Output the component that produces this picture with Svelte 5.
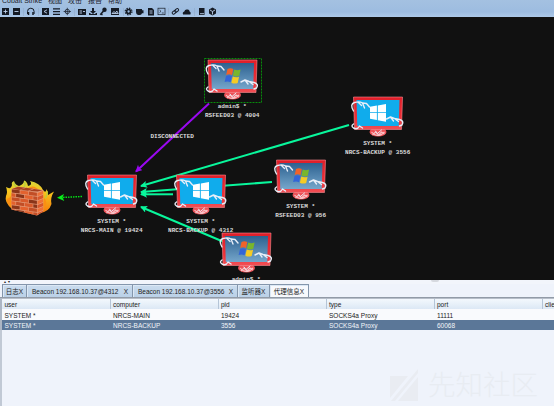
<script>
  const nodes = [
    { x: 208, y: 60, os: 'xp', user: 'admin$ *', host: 'RSFEED03 @ 4004', selected: true },
    { x: 353.5, y: 97, os: 'win8', user: 'SYSTEM *', host: 'NRCS-BACKUP @ 3556' },
    { x: 276.5, y: 160, os: 'xp', user: 'SYSTEM *', host: 'RSFEED03 @ 956' },
    { x: 87.5, y: 175, os: 'win8', user: 'SYSTEM *', host: 'NRCS-MAIN @ 19424' },
    { x: 176.5, y: 175, os: 'win8', user: 'SYSTEM *', host: 'NRCS-BACKUP @ 4312' },
    { x: 222, y: 233, os: 'xp', user: 'admin$ *', host: '' }
  ];
  const links = [
    [349, 125, 141, 186],
    [272, 182, 141, 192],
    [173, 194.3, 141, 194.3],
    [224, 242, 141, 207]
  ];
  const tabs = [
    { label: '日志', w: 25 },
    { label: 'Beacon 192.168.10.37@4312', w: 106, wide: true },
    { label: 'Beacon 192.168.10.37@3556', w: 105, wide: true },
    { label: '监听器', w: 32 },
    { label: '代理信息', w: 39, active: true }
  ];
  const columns = ['user', 'computer', 'pid', 'type', 'port', 'client'];
  const rows = [
    ['SYSTEM *', 'NRCS-MAIN', '19424', 'SOCKS4a Proxy', '11111', ''],
    ['SYSTEM *', 'NRCS-BACKUP', '3556', 'SOCKS4a Proxy', '60068', '']
  ];
  const courses = [0, 1, 2, 3, 4, 5];
  const clay = ['#8b3519', '#e4622e', '#c24e26', '#d95a2b'];
</script>

{#snippet flag(os)}
  {#if os === 'xp'}
    <g transform="translate(17 8)">
      <path d="M2.500 1Q5.500-.6 8.300 1L7 7.200Q4.500 5.600 1.200 7z" fill="#f0622a" />
      <path d="M9.200 1.500Q12.200 3 15.600 1.600L14.300 7.800Q11 9.200 7.900 7.600z" fill="#79b62c" />
      <path d="M1 8Q4 6.400 6.900 8L5.600 14.200Q2.600 12.800-.4 14z" fill="#3265d8" />
      <path d="M7.700 8.500Q11 10 14.100 8.700L12.700 15Q9.400 16.300 6.400 14.700z" fill="#f5cb24" />
    </g>
  {:else}
    <path d="M16.500 9.700L23.400 8.600V15.200H16.500zM24.300 8.400L32.500 7V15.200H24.300zM16.500 16.100H23.400V23L16.500 21.800zM24.300 16.100H32.500V24.700L24.300 23.200z" fill="#fff" />
  {/if}
{/snippet}

<div class="app">
  <header>
    <nav><span>Cobalt Strike</span><span>视图</span><span>攻击</span><span>报告</span><span>帮助</span></nav>
    <svg class="tools" width="225" height="14" viewBox="0 4 225 14">
      <g fill="#151b25">
        <path d="M2 8h7v7H2zM13 8h7v7h-7zM42 8h7v7h-7zM78 9h8v6h-8zM111 8h8v7h-8zM148 8h4l2 2v5.500h-6zM199 8h5.500v7H199zM92 8h2v3h2l-3 3-3-3h2zM89 13h1.500v1h5v-1H97v2h-8z" />
        <path d="M53 8.300h7v1.300h-7zM53 11h7v1.300h-7zM53 13.700h7V15h-7z" />
        <path d="M136 9h6v1.200h1.500v3H142q-.5 1.800-2 1.800h-2q-2-.5-2-3zM183 14.500q-.8-2.500 1.300-3 .7-2.600 3.100-2 2-.2 2.200 2 2 1 .8 3z" />
        <path d="M209 9.500l3.500-2 3.500 2v4l-3.500 2-3.500-2z" />
        <circle cx="104.500" cy="9.800" r="2.200" />
      </g>
      <g fill="none" stroke="#151b25">
        <path d="M27.500 14v-2.500a3.300 3.300 0 0 1 6.600 0V14" />
        <path d="M103.500 11l-3.200 3.800" stroke-width="1.600" />
        <path d="M28.500 12v3M33 12v3M101 14l1.500 1" stroke-width="1.500" />
        <circle cx="67.300" cy="11.500" r="2.200" stroke-width=".8" />
        <path d="M67.300 7.800v7.400M63.600 11.500H71" stroke-width=".7" />
        <circle cx="128.600" cy="11.500" r="2" stroke-width="1.700" />
        <circle cx="128.600" cy="11.500" r="3.400" stroke-width="1.100" stroke-dasharray="1.500 1.170" />
        <rect x="158" y="8.200" width="7" height="6.500" stroke-width=".7" />
        <path d="M159.500 10l1.500 1.300-1.500 1.300M161.800 13h2" stroke-width=".7" />
        <rect x="172" y="11.200" width="4.300" height="2.600" rx="1.300" transform="rotate(-40 174 12.500)" />
        <rect x="174.500" y="9" width="4.300" height="2.600" rx="1.300" transform="rotate(-40 176.700 10.300)" />
      </g>
      <g fill="none" stroke="#bed3ed" stroke-width=".9">
        <path d="M3.500 11.500h4M5.500 9.500v4M14.500 11.500h4M44 11.500l3-1.700M44 11.500l3 1.700M79.500 11h2.500M79.500 13h2.500M83 11.500h2M112 13.500l2-2 1.500 1.500 1.300-2 1.500 2.500zM149.500 11h3M149.500 13h3M200 13.700h4M210 10l2.500 1.500L215 10M212.500 11.500v3" />
      </g>
      <path d="M23.500 8v8M38.500 8v8M74.500 8v8M123.500 8v8M168.500 8v8M194.500 8v8" stroke="#8fa6c3" stroke-width=".5" />
    </svg>
  </header>

  <svg class="graph" width="554" height="263" viewBox="0 17 554 263">
    <defs>
      <linearGradient id="steel" x2="0" y2="1"><stop stop-color="#2d6190" /><stop offset="1" stop-color="#75a6cb" /></linearGradient>
      <linearGradient id="frame" x2="0" y2="1"><stop stop-color="#df1e29" /><stop offset=".7" stop-color="#ee3239" /><stop offset="1" stop-color="#f25056" /></linearGradient>
      <linearGradient id="fire" x2="0" y2="1"><stop stop-color="#d4d53b" /><stop offset=".35" stop-color="#f8c51d" /><stop offset="1" stop-color="#f47b0b" /></linearGradient>
      <clipPath id="wall"><path d="M11.500 189L37 191.500V215.500L11.500 209.500z" /></clipPath>
      <clipPath id="side"><path d="M37 191.500L43.300 190V211.500L37 215.500z" /></clipPath>
      <marker id="tip" markerUnits="userSpaceOnUse" markerWidth="8" markerHeight="8" refX="6" refY="3.500" orient="auto"><path d="M0 0L7 3.500L0 7L1.500 3.500z" fill="#09f79c" /></marker>
      <marker id="tip-off" markerUnits="userSpaceOnUse" markerWidth="8" markerHeight="8" refX="6" refY="3.500" orient="auto"><path d="M0 0L7 3.500L0 7L1.500 3.500z" fill="#9a08f2" /></marker>
    </defs>

    <g class="firewall">
      <path d="M12 209Q4 202 6 196Q8 192 6 187Q11 190 12 185Q11 182 14 181Q15 185 19 186Q24 184 24 180.500Q27 181 28 186Q33 185 30 181Q40 183 43 190Q46 194 46.500 189Q48 192 48 195L54 191.500Q50 198 51.500 204Q49 212 40 213z" fill="url(#fire)" />
      <path d="M6.500 199Q10 198 12 195V207Q7 205 6.500 199zM27 189Q33 183 40 191zM44 198Q49 202 43.500 210z" fill="#fa8f12" />
      <path d="M14 183Q15 187 18 188M24.500 182Q26 186 23 188M47 191Q48 195 45 198" fill="none" stroke="#b7cf3c" stroke-width="1.300" />
      <path d="M11.500 189L18 186.500L43.300 190V211.500L37 215.500L11.500 209.500z" fill="#e39a78" />
      <g clip-path="url(#wall)">
        {#each courses as row}
          {#each [0, 1, 2, 3] as col}
            <path
              d="M{(row % 2 ? 7.500 : 11.700) + col * 8.600} {(row % 2 ? 188.600 : 189.200) + row * 4 + col * 1.200}l8 1.100v3.300l-8-1.100z"
              fill={clay[(row * 3 + col) % 4]}
            />
          {/each}
        {/each}
      </g>
      <g clip-path="url(#side)">
        {#each courses as row}
          <path d="M37.500 {193 + row * 4}l6-2.200v3.200l-6 2.200z" fill={row % 2 ? '#d8572a' : '#ee7036'} />
        {/each}
      </g>
      <path d="M12 189l6-2.300 7 1-5.500 2.200zM20.500 190l5.500-2.200 7 1-5 2zM29 191l5-2 8.500 1.200-5 1.300z" fill="#a84020" />
    </g>

    <path d="M82 196.500L62 197.500" stroke="#05e316" stroke-width="1.500" stroke-dasharray="1.500 1" />
    <path d="M57 197.800l7-3.800-1.500 3.600 1.800 3.300z" fill="#0aed1c" />
    <path d="M209 103.500L136 171.500" stroke="#9a08f2" stroke-width="2" marker-end="url(#tip-off)" />
    {#each links as [x1, y1, x2, y2]}
      <line {x1} {y1} {x2} {y2} stroke="#09f79c" stroke-width="2" marker-end="url(#tip)" />
    {/each}
    <text x="172.200" y="137.800">DISCONNECTED</text>

    {#each nodes as n}
      <g transform="translate({n.x} {n.y})">
        {#if n.selected}
          <rect x="-3.500" y="-1.500" width="57" height="44" fill="none" stroke="#079b0c" stroke-dasharray="2 1" stroke-width=".9" />
        {/if}
        <ellipse cx="24.500" cy="35" rx="8.500" ry="4.600" fill="#ed5258" />
        <path d="M18 35q6 7 13 0M19 38l3-3 3 3 3-3 3 2" fill="none" stroke="#f9c2c6" stroke-width="1.100" />
        <path d="M0 0H49L48 32.500H1z" fill="url(#frame)" stroke="#f78c90" stroke-width=".6" />
        <path d="M3 3H46L45.200 29H3.800z" fill={n.os === 'xp' ? 'url(#steel)' : '#10acec'} />
        {@render flag(n.os)}
        <g fill="none" stroke="#e8eef8" stroke-linecap="round" stroke-linejoin="round" stroke-width="1.400">
          <path d="M0 14Q-4 7 1 5.500Q6 4 9 6L13 6.500L16 10M9 6l2 5M5 5.500l3 3M0 27Q-3 29 0 31Q4 33 6 29L9 31" />
          <path d="M33 22l4-2 4 1.500 5 1Q51 24 48.500 28L46 29M37 20l3 4M41 21.500l4 3" />
          <path d="M22 34l2 2.500 4-3.500" stroke-width="1" />
        </g>
        <text x="24.200" y="47.500">{n.user}</text>
        <text x="24.200" y="56.500">{n.host}</text>
      </g>
    {/each}
  </svg>

  <div class="divider"><i>▴ &nbsp;▾</i><b></b></div>
  <div class="tabs">
    {#each tabs as t}
      <div class="tab" class:active={t.active} class:wide={t.wide} style="width:{t.w}px"><span>{t.label}</span><span>X</span></div>
    {/each}
  </div>
  <div class="table">
    <div class="row head">{#each columns as c}<div>{c}</div>{/each}</div>
    {#each rows as r, i}
      <div class="row" class:chosen={i === 1}>{#each r as c}<div>{c}</div>{/each}</div>
    {/each}
  </div>
  <div class="rest">
    <div class="mark">
      <svg width="29" height="34" viewBox="0 0 29 34"><path d="M0 7H18L0 29zM28 8V32H8zM28 0V4L5 32H1z" fill="#e9ecf2" /></svg>
      <span>先知社区</span>
    </div>
  </div>
</div>

<style>
  .app { width: 554px; height: 406px; overflow: hidden; display: flex; flex-direction: column; background: #eff3fb; color: #222; font: 6.5px/10px "Liberation Sans", "Noto Sans CJK SC", sans-serif; }
  header { height: 17px; flex: none; overflow: hidden; background: linear-gradient(#a4c1e1, #9dbce0 70%, #adc9e8); display: flex; flex-direction: column; }
  nav { height: 4px; flex: none; overflow: hidden; display: flex; gap: 6px; padding-left: 2px; font-size: 7px; line-height: 1px; white-space: nowrap; color: #1b222d; }
  .tools { flex: none; display: block; }
  .graph { flex: none; display: block; background: #111; }
  text { font: bold 6.05px "Liberation Mono", monospace; fill: #dcdcdc; text-anchor: middle; white-space: pre; }
  .divider { height: 4px; flex: none; display: flex; overflow: hidden; background: #f2f5fb; }
  i { width: 431px; padding-left: 4px; box-sizing: border-box; font-size: 4px; line-height: 3px; font-style: normal; }
  b { width: 8px; height: 2px; background: #d6d9df; border-radius: 0 0 2px 2px; }
  .tabs { height: 14px; flex: none; display: flex; padding-left: 2px; box-sizing: border-box; border-bottom: 1px solid #929ba7; }
  .tab { box-sizing: border-box; border: solid #8496ac; border-width: 1px 1px 0 0; box-shadow: inset 1px 1px #dce8f5; background: linear-gradient(#cadcee, #bad0e7); display: flex; justify-content: center; align-items: center; padding-top: 1px; white-space: nowrap; overflow: hidden; }
  .tab:first-child { border-left-width: 1px; }
  .wide { justify-content: space-between; padding: 1px 4px 0 5px; }
  .active { background: #f7f9fd; }
  .table { flex: none; border-left: 2px solid #acb6c4; border-top: 1px solid #b7bec9; }
  .row { display: grid; grid-template-columns: 108.5px 108px 108px 108px 108px 12px; height: 11px; background: #f9fafd; align-items: center; white-space: nowrap; }
  .row div { overflow: hidden; padding-left: 2.5px; line-height: 11px; height: 10px; }
  .head { height: 10px; background: linear-gradient(#f3f8fd, #dce8f5); }
  .head div { border-right: 1px solid #b5c5d7; }
  .chosen { height: 10px; background: #5b7798; color: #f2f5f9; }
  .rest { flex: 1; display: flex; justify-content: flex-end; align-items: flex-end; border-left: 2px solid #c1c9d5; }
  .mark { display: flex; align-items: center; gap: 9px; margin: 0 16px 3px 0; color: #e8ecf2; font-size: 27.500px; font-weight: 300; line-height: 34px; }
</style>
